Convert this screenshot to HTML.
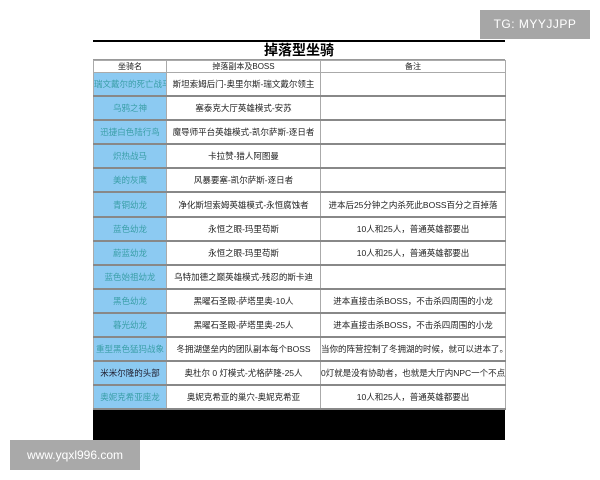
<!DOCTYPE html>
<html><head><meta charset="utf-8"><style>
body{margin:0;width:600px;height:480px;background:#fff;position:relative;overflow:hidden;font-family:"Liberation Sans","Noto Sans CJK SC",sans-serif}
.tg{position:absolute;left:480px;top:10px;width:110px;height:29px;background:#a6a6a6;color:#fff;font-size:12px;line-height:29px;text-align:center;letter-spacing:.5px}
.www{position:absolute;left:10px;top:440px;width:130px;height:30px;background:#a9a9a9;color:#fff;font-size:12px;line-height:30px;text-align:center}
.wrap{position:absolute;left:93px;top:40px;width:412px}
.topline{height:2px;background:#000}
.title{height:17px;text-align:center;font-size:14px;font-weight:bold;line-height:17px;border-bottom:1px solid #999}
table{border-collapse:collapse;width:412px;table-layout:fixed}
td{border:1px solid #aaa;font-size:8.5px;text-align:center;padding:0;white-space:nowrap;overflow:hidden;color:#222}
tr.h td{height:10px;font-size:8px}
tr.r td{height:22.1px;border-bottom:2px solid #888}
td.n{background:#8ccaf2;color:#3a9fa8}
.black{position:absolute;left:93px;top:410px;width:412px;height:30px;background:#000}
</style></head><body>
<div class="tg">TG: MYYJJPP</div>
<div class="wrap">
<div class="topline"></div>
<div class="title">掉落型坐骑</div>
<table>
<colgroup><col style="width:73px"><col style="width:154px"><col style="width:185px"></colgroup>
<tr class="h"><td>坐骑名</td><td>掉落副本及BOSS</td><td>备注</td></tr>
<tr class="r"><td class="n">瑞文戴尔的死亡战马</td><td>斯坦索姆后门-奥里尔斯-瑞文戴尔领主</td><td></td></tr>
<tr class="r"><td class="n">乌鸦之神</td><td>塞泰克大厅英雄模式-安苏</td><td></td></tr>
<tr class="r"><td class="n">迅捷白色陆行鸟</td><td>魔导师平台英雄模式-凯尔萨斯-逐日者</td><td></td></tr>
<tr class="r"><td class="n">炽热战马</td><td>卡拉赞-猎人阿图曼</td><td></td></tr>
<tr class="r"><td class="n">美的灰鹰</td><td>风暴要塞-凯尔萨斯-逐日者</td><td></td></tr>
<tr class="r"><td class="n">青铜幼龙</td><td>净化斯坦索姆英雄模式-永恒腐蚀者</td><td>进本后25分钟之内杀死此BOSS百分之百掉落</td></tr>
<tr class="r"><td class="n">蓝色幼龙</td><td>永恒之眼-玛里苟斯</td><td>10人和25人，普通英雄都要出</td></tr>
<tr class="r"><td class="n">蔚蓝幼龙</td><td>永恒之眼-玛里苟斯</td><td>10人和25人，普通英雄都要出</td></tr>
<tr class="r"><td class="n">蓝色始祖幼龙</td><td>乌特加德之巅英雄模式-残忍的斯卡迪</td><td></td></tr>
<tr class="r"><td class="n">黑色幼龙</td><td>黑曜石圣殿-萨塔里奥-10人</td><td>进本直接击杀BOSS，不击杀四周围的小龙</td></tr>
<tr class="r"><td class="n">暮光幼龙</td><td>黑曜石圣殿-萨塔里奥-25人</td><td>进本直接击杀BOSS，不击杀四周围的小龙</td></tr>
<tr class="r"><td class="n">重型黑色猛犸战象</td><td>冬拥湖堡垒内的团队副本每个BOSS</td><td>当你的阵营控制了冬拥湖的时候，就可以进本了。</td></tr>
<tr class="r"><td class="n" style="color:#223">米米尔隆的头部</td><td>奥杜尔 0 灯模式-尤格萨隆-25人</td><td style="text-align:left">0灯就是没有协助者，也就是大厅内NPC一个不点</td></tr>
<tr class="r"><td class="n">奥妮克希亚座龙</td><td>奥妮克希亚的巢穴-奥妮克希亚</td><td>10人和25人，普通英雄都要出</td></tr>
</table>
</div>
<div class="black"></div>
<div class="www">www.yqxl996.com</div>
</body></html>
